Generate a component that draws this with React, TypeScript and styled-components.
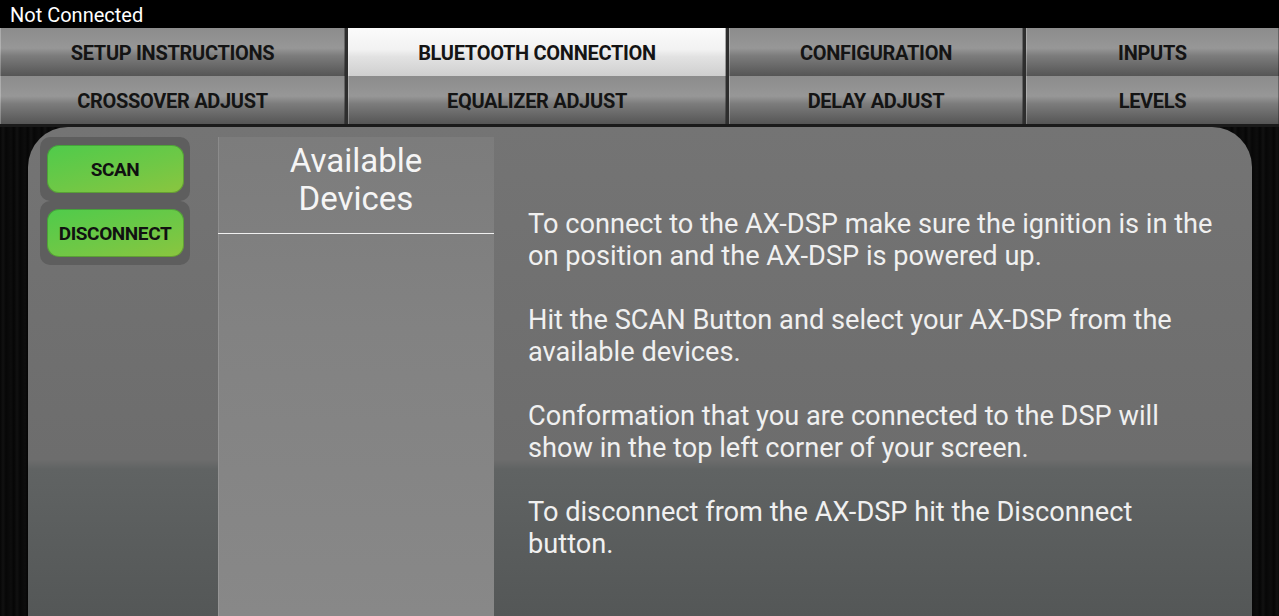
import React from 'react';
import styled, { createGlobalStyle } from 'styled-components';

const GlobalStyle = createGlobalStyle`
  html, body {
    margin: 0;
    padding: 0;
    background: #050505;
    font-family: Roboto, "Noto Sans", sans-serif;
    overflow: hidden;
  }
`;

const Screen = styled.div`
  width: 1279px;
  height: 616px;
  display: flex;
  flex-direction: column;
  background: #050505;
`;

const StatusBar = styled.div`
  height: 28px;
  flex: none;
  background: #000;
  color: #fff;
  font-size: 20px;
  line-height: 30px;
  padding-left: 10px;
`;

const TabGrid = styled.div`
  flex: none;
  display: grid;
  grid-template-columns: 345px 378px 294px 1fr;
  grid-auto-rows: 48px;
  column-gap: 3px;
  background: #2e2e2e;
  border-bottom: 3px solid #1a1a1a;
`;

const Tab = styled.div<{ $active?: boolean }>`
  display: flex;
  align-items: center;
  justify-content: center;
  padding-top: 2px;
  font-size: 20px;
  font-weight: 700;
  color: #141414;
  letter-spacing: -0.3px;
  background: ${(p) =>
    p.$active
      ? 'linear-gradient(#fbfbfb 0%, #f2f2f2 45%, #e2e2e2 60%, #cfcfcf 100%)'
      : 'linear-gradient(#8c8c8c 0%, #979797 42%, #7c7c7c 58%, #555 100%)'};
  box-shadow: inset 1px 0 0 rgba(255, 255, 255, 0.25), inset -1px 0 0 rgba(0, 0, 0, 0.3);
`;

const Stage = styled.div`
  flex: 1;
  display: flex;
  padding: 0 27px 0 28px;
  background: repeating-linear-gradient(
    90deg,
    #060606 0px,
    #111 3px,
    #070707 6px,
    #0d0d0d 11px,
    #050505 14px
  );
`;

const Panel = styled.div`
  flex: 1;
  display: flex;
  align-items: flex-start;
  border-radius: 40px 40px 0 0;
  padding: 10px 12px 0 12px;
  background: linear-gradient(
    to bottom,
    #747474 0%,
    #6d6d6d 68%,
    #606363 70%,
    #545757 100%
  );
`;

const ButtonStack = styled.div`
  width: 150px;
  flex: none;
  display: flex;
  flex-direction: column;
`;

const ButtonFrame = styled.div`
  height: 64px;
  background: #5e5e5e;
  border-radius: 10px;
  display: flex;
  align-items: center;
  justify-content: center;
`;

const GreenButton = styled.div`
  width: 137px;
  height: 48px;
  border-radius: 12px;
  background: linear-gradient(165deg, #4fcb4b 0%, #6ec846 55%, #8bc53f 100%);
  box-shadow: inset 0 0 0 1px rgba(40, 90, 30, 0.35);
  display: flex;
  align-items: center;
  justify-content: center;
  font-size: 19px;
  font-weight: 700;
  color: #111;
  letter-spacing: -0.4px;
`;

const DeviceList = styled.div`
  width: 276px;
  flex: none;
  margin-left: 28px;
  align-self: stretch;
  background: linear-gradient(to bottom, #7c7c7c 0%, #828282 40%, #888 100%);
  box-shadow: inset 1px 0 0 rgba(255, 255, 255, 0.12);
`;

const DeviceHeader = styled.div`
  padding: 5px 0 15px;
  border-bottom: 1px solid #f0f0f0;
  text-align: center;
  color: #f5f5f5;
  font-size: 33px;
  line-height: 38px;
`;

const Instructions = styled.div`
  flex: 1;
  margin-left: 34px;
  padding: 71px 18px 0 0;
  color: #f0f0f0;
  font-size: 27.2px;
  line-height: 32px;
`;

const Para = styled.p`
  margin: 0 0 32px;
`;

const topTabs = ['SETUP INSTRUCTIONS', 'BLUETOOTH CONNECTION', 'CONFIGURATION', 'INPUTS'];
const bottomTabs = ['CROSSOVER ADJUST', 'EQUALIZER ADJUST', 'DELAY ADJUST', 'LEVELS'];

export default function App() {
  return (
    <Screen>
      <GlobalStyle />
      <StatusBar>Not Connected</StatusBar>
      <TabGrid>
        {topTabs.map((t) => (
          <Tab key={t} $active={t === 'BLUETOOTH CONNECTION'}>
            {t}
          </Tab>
        ))}
        {bottomTabs.map((t) => (
          <Tab key={t}>{t}</Tab>
        ))}
      </TabGrid>
      <Stage>
        <Panel>
          <ButtonStack>
            <ButtonFrame>
              <GreenButton>SCAN</GreenButton>
            </ButtonFrame>
            <ButtonFrame>
              <GreenButton>DISCONNECT</GreenButton>
            </ButtonFrame>
          </ButtonStack>
          <DeviceList>
            <DeviceHeader>
              Available
              <br />
              Devices
            </DeviceHeader>
          </DeviceList>
          <Instructions>
            <Para>
              To connect to the AX-DSP make sure the ignition is in the on position and the AX-DSP is
              powered up.
            </Para>
            <Para>Hit the SCAN Button and select your AX-DSP from the available devices.</Para>
            <Para>
              Conformation that you are connected to the DSP will show in the top left corner of
              your screen.
            </Para>
            <Para>To disconnect from the AX-DSP hit the Disconnect button.</Para>
          </Instructions>
        </Panel>
      </Stage>
    </Screen>
  );
}
